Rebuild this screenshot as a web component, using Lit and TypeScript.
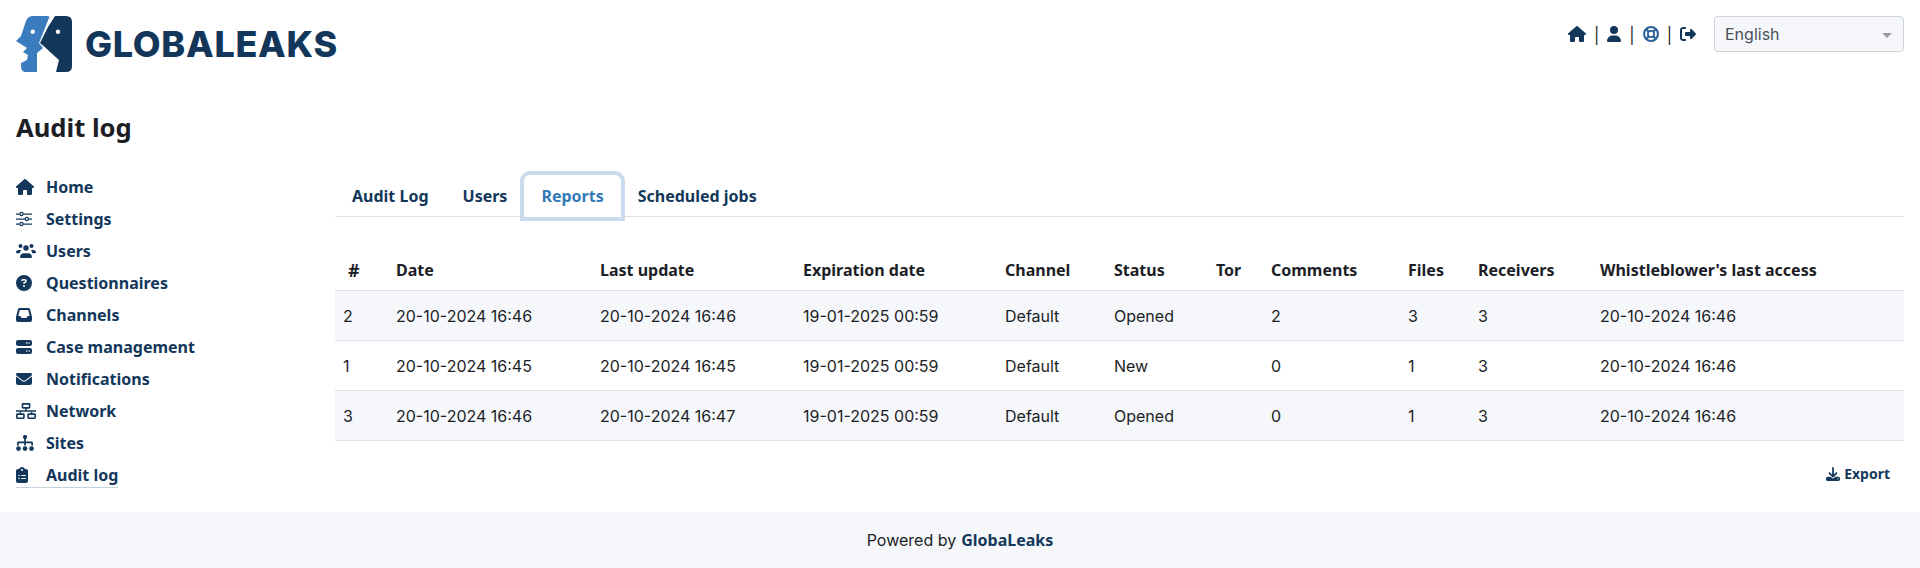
import {LitElement, html, css, svg} from 'lit';
import {customElement} from 'lit/decorators.js';

const ICONS: Record<string, [number, ReturnType<typeof svg>]> = {
  house: [576, svg`<path d="M575.8 255.5c0 18-15 32.1-32 32.1h-32l.7 160.2c0 2.7-.2 5.4-.5 8.1V472c0 22.1-17.9 40-40 40H456c-1.1 0-2.2 0-3.3-.1c-1.4 .1-2.8 .1-4.2 .1H416 392c-22.1 0-40-17.9-40-40V448 384c0-17.7-14.3-32-32-32H256c-17.7 0-32 14.3-32 32v64 24c0 22.1-17.9 40-40 40H160 128.1c-1.5 0-3-.1-4.5-.2c-1.2 .1-2.4 .2-3.6 .2H104c-22.1 0-40-17.9-40-40V360c0-.9 0-1.9 .1-2.8V287.6H32c-18 0-32-14-32-32.1c0-9 3-17 10-24L266.4 8c7-7 15-8 22-8s15 2 21 7L564.8 231.5c8 7 12 15 11 24z"/>`],
  user: [448, svg`<path d="M224 256A128 128 0 1 0 224 0a128 128 0 1 0 0 256zm-45.7 48C79.8 304 0 383.8 0 482.3C0 498.7 13.3 512 29.7 512H418.3c16.4 0 29.7-13.3 29.7-29.7C448 383.8 368.2 304 269.7 304H178.3z"/>`],
  ring: [512, svg`<g fill="none" stroke="#2a6199"><circle cx="256" cy="256" r="222" stroke-width="66"/><circle cx="256" cy="256" r="100" stroke-width="56"/><path stroke-width="70" d="M90 90l95 95M422 90l-95 95M90 422l95-95M422 422l-95-95"/></g>`],
  out: [512, svg`<path d="M377.9 105.9L500.7 228.7c7.2 7.2 11.3 17.1 11.3 27.3s-4.1 20.1-11.3 27.3L377.9 406.1c-6.4 6.4-15 9.9-24 9.9c-18.7 0-33.9-15.2-33.9-33.9l0-62.1-128 0c-17.7 0-32-14.3-32-32l0-64c0-17.7 14.3-32 32-32l128 0 0-62.1c0-18.7 15.2-33.9 33.9-33.9c9 0 17.6 3.6 24 9.9zM160 96L96 96c-17.7 0-32 14.3-32 32l0 256c0 17.7 14.3 32 32 32l64 0c17.7 0 32 14.3 32 32s-14.3 32-32 32l-64 0c-53 0-96-43-96-96L0 128C0 75 43 32 96 32l64 0c17.7 0 32 14.3 32 32s-14.3 32-32 32z"/>`],
  sliders: [512, svg`<g fill="none" stroke="currentColor" stroke-width="40"><path d="M0 96h120M230 96h282M0 256h290M400 256h112M0 416h120M230 416h282"/><circle cx="175" cy="96" r="50"/><circle cx="345" cy="256" r="50"/><circle cx="175" cy="416" r="50"/></g>`],
  users: [640, svg`<circle cx="144" cy="96" r="64"/><circle cx="496" cy="96" r="64"/><circle cx="320" cy="160" r="88"/><path d="M0 298c0-42 34-74 74-74h48c14 0 28 3 40 9-24 24-40 54-44 91H21c-12 0-21-10-21-26zM640 298c0-42-34-74-74-74h-48c-14 0-28 3-40 9 24 24 40 54 44 91h97c12 0 21-10 21-26zM130 450c0-70 55-122 118-122h144c63 0 118 52 118 122 0 17-14 30-30 30H160c-16 0-30-13-30-30z"/>`],
  question: [512, svg`<path d="M256 512A256 256 0 1 0 256 0a256 256 0 1 0 0 512zM169.8 165.3c7.9-22.3 29.1-37.3 52.8-37.3h58.3c34.9 0 63.1 28.3 63.1 63.1c0 22.6-12.1 43.5-31.7 54.8L280 264.4c-.2 13-10.9 23.6-24 23.6c-13.3 0-24-10.7-24-24V250.5c0-8.6 4.6-16.5 12.1-20.8l44.3-25.4c4.7-2.7 7.6-7.7 7.6-13.1c0-8.4-6.8-15.1-15.1-15.1H222.6c-3.4 0-6.4 2.1-7.5 5.3l-.4 1.2c-4.4 12.5-18.2 19-30.6 14.6s-19-18.2-14.6-30.6l.4-1.2zM224 352a32 32 0 1 1 64 0 32 32 0 1 1 -64 0z"/>`],
  inbox: [512, svg`<path d="M121 32C91.6 32 66 52 58.9 80.5L1.9 308.4C.6 313.5 0 318.7 0 323.9V416c0 35.3 28.7 64 64 64H448c35.3 0 64-28.7 64-64V323.9c0-5.2-.6-10.4-1.9-15.5l-57-227.9C446 52 420.4 32 391 32H121zm0 64H391l48 192H387.8c-12.1 0-23.2 6.8-28.6 17.7l-14.3 28.6c-5.4 10.8-16.5 17.7-28.6 17.7H195.8c-12.1 0-23.2-6.8-28.6-17.7l-14.3-28.6c-5.4-10.8-16.5-17.7-28.6-17.7H73L121 96z"/>`],
  server: [512, svg`<path d="M64 32C28.7 32 0 60.7 0 96v64c0 35.3 28.7 64 64 64H448c35.3 0 64-28.7 64-64V96c0-35.3-28.7-64-64-64H64zm280 72a24 24 0 1 1 0 48 24 24 0 1 1 0-48zm48 24a24 24 0 1 1 48 0 24 24 0 1 1 -48 0zM64 288c-35.3 0-64 28.7-64 64v64c0 35.3 28.7 64 64 64H448c35.3 0 64-28.7 64-64V352c0-35.3-28.7-64-64-64H64zm280 72a24 24 0 1 1 0 48 24 24 0 1 1 0-48zm56 24a24 24 0 1 1 48 0 24 24 0 1 1 -48 0z"/>`],
  envelope: [512, svg`<path d="M48 64C21.5 64 0 85.5 0 112c0 15.1 7.1 29.3 19.2 38.4L236.8 313.6c11.4 8.5 27 8.5 38.4 0L492.8 150.4c12.1-9.1 19.2-23.3 19.2-38.4c0-26.5-21.5-48-48-48H48zM0 176V384c0 35.3 28.7 64 64 64H448c35.3 0 64-28.7 64-64V176L294.4 339.2c-22.8 17.1-54 17.1-76.8 0L0 176z"/>`],
  network: [640, svg`<g fill="none" stroke="currentColor" stroke-width="52"><rect x="206" y="26" width="228" height="130" rx="20"/><rect x="26" y="356" width="228" height="130" rx="20"/><rect x="386" y="356" width="228" height="130" rx="20"/></g><path d="M296 156h48v76h296v48H0v-48h296z"/><path d="M116 280h48v60h-48zM476 280h48v60h-48z"/>`],
  sitemap: [576, svg`<circle cx="288" cy="64" r="68"/><circle cx="80" cy="432" r="76"/><circle cx="288" cy="432" r="76"/><circle cx="496" cy="432" r="76"/><path d="M260 100h56v108h180c30 0 48 20 48 48v80h-56v-72H316v72h-56v-72H88v72H32v-80c0-28 18-48 48-48h180z"/>`],
  clipboard: [384, svg`<path d="M192 0c-41.8 0-77.4 26.7-90.5 64H64C28.7 64 0 92.7 0 128V448c0 35.3 28.7 64 64 64H320c35.3 0 64-28.7 64-64V128c0-35.3-28.7-64-64-64H282.5C269.4 26.7 233.8 0 192 0zm0 64a32 32 0 1 1 0 64 32 32 0 1 1 0-64zM72 272a24 24 0 1 1 48 0 24 24 0 1 1 -48 0zm104-16H304c8.8 0 16 7.2 16 16s-7.2 16-16 16H176c-8.8 0-16-7.2-16-16s7.2-16 16-16zM72 368a24 24 0 1 1 48 0 24 24 0 1 1 -48 0zm88 0c0-8.8 7.2-16 16-16H304c8.8 0 16 7.2 16 16s-7.2 16-16 16H176c-8.8 0-16-7.2-16-16z"/>`],
  download: [512, svg`<path d="M288 32c0-17.7-14.3-32-32-32s-32 14.3-32 32V274.7l-73.4-73.4c-12.5-12.5-32.8-12.5-45.3 0s-12.5 32.8 0 45.3l128 128c12.5 12.5 32.8 12.5 45.3 0l128-128c12.5-12.5 12.5-32.8 0-45.3s-32.8-12.5-45.3 0L288 274.7V32zM64 352c-35.3 0-64 28.7-64 64v32c0 35.3 28.7 64 64 64H448c35.3 0 64-28.7 64-64V416c0-35.3-28.7-64-64-64H346.5l-45.3 45.3c-25 25-65.5 25-90.5 0L165.5 352H64zm368 56a24 24 0 1 1 0 48 24 24 0 1 1 0-48z"/>`],
};

const icon = (name: string, cls = '') => {
  const [w, body] = ICONS[name];
  return html`<svg class="fa ${cls}" viewBox="0 0 ${w} 512" fill="currentColor">${body}</svg>`;
};

const NAV = [
  ['house', 'Home'],
  ['sliders', 'Settings'],
  ['users', 'Users'],
  ['question', 'Questionnaires'],
  ['inbox', 'Channels'],
  ['server', 'Case management'],
  ['envelope', 'Notifications'],
  ['network', 'Network'],
  ['sitemap', 'Sites'],
  ['clipboard', 'Audit log'],
];

const COLS = [53, 204, 203, 202, 109, 102, 55, 137, 70, 122];
const HEAD = ['#', 'Date', 'Last update', 'Expiration date', 'Channel', 'Status', 'Tor', 'Comments', 'Files', 'Receivers', "Whistleblower's last access"];
const ROWS = [
  ['2', '20-10-2024 16:46', '20-10-2024 16:46', '19-01-2025 00:59', 'Default', 'Opened', '', '2', '3', '3', '20-10-2024 16:46'],
  ['1', '20-10-2024 16:45', '20-10-2024 16:45', '19-01-2025 00:59', 'Default', 'New', '', '0', '1', '3', '20-10-2024 16:46'],
  ['3', '20-10-2024 16:46', '20-10-2024 16:47', '19-01-2025 00:59', 'Default', 'Opened', '', '0', '1', '3', '20-10-2024 16:46'],
];

@customElement('app-root')
export class AppRoot extends LitElement {
  static override styles = css`
    :host {
      display: block;
      height: 568px;
      position: relative;
      font-family: Inter, 'Liberation Sans', sans-serif;
      font-size: 16px;
      color: #1c1e26;
      background: #fff;
      overflow: hidden;
    }
    .bold {
      font-family: 'Noto Sans', sans-serif;
      font-weight: 700;
    }
    .fa {
      height: 1em;
      display: block;
      flex: none;
    }
    header {
      display: flex;
      justify-content: space-between;
      padding: 16px 16px 0;
      height: 85px;
      box-sizing: border-box;
    }
    .logo {
      display: flex;
      align-items: center;
      gap: 13px;
      height: 56px;
      color: #13375b;
    }
    .logo svg {
      width: 56px;
      height: 56px;
      display: block;
    }
    .logo span {
      font-family: Inter, sans-serif;
      font-weight: 800;
      font-size: 36px;
      letter-spacing: 0.7px;
      line-height: 44px;
    }
    .tools {
      display: flex;
      align-items: flex-start;
      gap: 18px;
    }
    .links {
      display: flex;
      align-items: center;
      height: 18px;
      margin-top: 9px;
      color: #13375b;
      font-size: 16px;
    }
    .links i {
      font-style: normal;
      color: #1c1e26;
      margin: 2px 8px 0;
    }
    .select {
      width: 190px;
      height: 36px;
      box-sizing: border-box;
      border: 1px solid #ced4da;
      border-radius: 4px;
      background: #f5f7fa;
      display: flex;
      align-items: center;
      justify-content: space-between;
      padding: 0 11px 0 10px;
      color: #495057;
    }
    .select b {
      width: 0;
      height: 0;
      border-left: 5px solid transparent;
      border-right: 5px solid transparent;
      border-top: 5px solid #999;
      margin-top: 2px;
    }
    h1 {
      margin: 0;
      padding: 26px 16px 0;
      font-size: 25.6px;
      line-height: 33px;
      height: 58px;
      box-sizing: border-box;
      color: #1c1e26;
    }
    .main {
      display: flex;
      padding: 0 16px;
    }
    nav {
      width: 319px;
      flex: none;
      padding-top: 28px;
    }
    .item {
      display: flex;
      align-items: center;
      width: max-content;
      height: 32px;
      color: #13375b;
    }
    .item.on {
      height: 29px;
      box-sizing: border-box;
      padding-top: 4px;
      border-bottom: 1px solid #c5d2de;
    }
    .item .slot {
      width: 30px;
      flex: none;
    }
    .content {
      flex: 1;
      min-width: 0;
    }
    .tabs {
      display: flex;
      margin-top: 32px;
      height: 42px;
      box-sizing: border-box;
      border-bottom: 1px solid #dee2e6;
      color: #13375b;
    }
    .tab {
      padding: 0 17px;
      height: 42px;
      line-height: 42px;
      box-sizing: border-box;
    }
    .tab.on {
      color: #337ab7;
      background: #fff;
      border-radius: 6px 6px 0 0;
      position: relative;
      z-index: 1;
      box-shadow: 0 0 0 4px #c9dbec;
    }
    table {
      width: 100%;
      border-collapse: collapse;
      table-layout: fixed;
      margin-top: 32px;
    }
    th {
      text-align: left;
      padding: 0 8px;
      height: 41px;
      border-bottom: 1px solid #dee2e6;
      white-space: nowrap;
    }
    th:first-child {
      padding-left: 13px;
      font-size: 18px;
    }
    td {
      padding: 0 8px;
      height: 49px;
      border-bottom: 1px solid #dee2e6;
      white-space: nowrap;
    }
    tr.odd td {
      background: #f5f7fa;
    }
    .export {
      display: flex;
      justify-content: flex-end;
      align-items: center;
      gap: 4px;
      margin-top: 23px;
      padding-right: 14px;
      font-size: 14px;
      color: #13375b;
    }
    .export .fa {
      height: 14px;
    }
    footer {
      position: absolute;
      left: 0;
      right: 0;
      top: 512px;
      height: 56px;
      background: #f5f7fa;
      display: flex;
      align-items: center;
      justify-content: center;
      gap: 5px;
    }
    footer .bold {
      color: #13375b;
    }
  `;

  override render() {
    return html`
      <header>
        <div class="logo">
          <svg viewBox="0 0 56 56">
            <path fill="#3a7cbd" d="M10 5Q12 0 17 0H31Q34 0 33 2L23 27L27 32L21 37V56H10Q5 56 5 50V47L11 44L12 39L7 36L11 32L0 25L5 20Z"/>
            <circle cx="16.7" cy="15.7" r="2.2" fill="#fff"/>
            <path fill="#13375b" d="M39 0H50Q56 0 56 6V50Q56 56 50 56H40L43 44L34 36L31 33L24 27L32 11Z"/>
            <circle cx="42" cy="15.7" r="2.2" fill="#fff"/>
          </svg>
          <span>GLOBALEAKS</span>
        </div>
        <div class="tools">
          <div class="links">
            ${icon('house')}<i>|</i>${icon('user')}<i>|</i>${icon('ring')}<i>|</i>${icon('out')}
          </div>
          <div class="select">English<b></b></div>
        </div>
      </header>
      <h1 class="bold">Audit log</h1>
      <div class="main">
        <nav>
          ${NAV.map(([ic, label], i) => html`
            <div class="item bold ${i === NAV.length - 1 ? 'on' : ''}">
              <span class="slot">${icon(ic)}</span>${label}
            </div>
          `)}
        </nav>
        <div class="content">
          <div class="tabs bold">
            <div class="tab">Audit Log</div>
            <div class="tab">Users</div>
            <div class="tab on">Reports</div>
            <div class="tab">Scheduled jobs</div>
          </div>
          <table>
            <colgroup>${COLS.map(w => html`<col style="width:${w}px">`)}<col></colgroup>
            <thead><tr>${HEAD.map(h => html`<th class="bold">${h}</th>`)}</tr></thead>
            <tbody>
              ${ROWS.map((r, i) => html`
                <tr class="${i % 2 === 0 ? 'odd' : ''}">${r.map(c => html`<td>${c}</td>`)}</tr>
              `)}
            </tbody>
          </table>
          <div class="export bold">${icon('download')}Export</div>
        </div>
      </div>
      <footer>Powered by <span class="bold">GlobaLeaks</span></footer>
    `;
  }
}
